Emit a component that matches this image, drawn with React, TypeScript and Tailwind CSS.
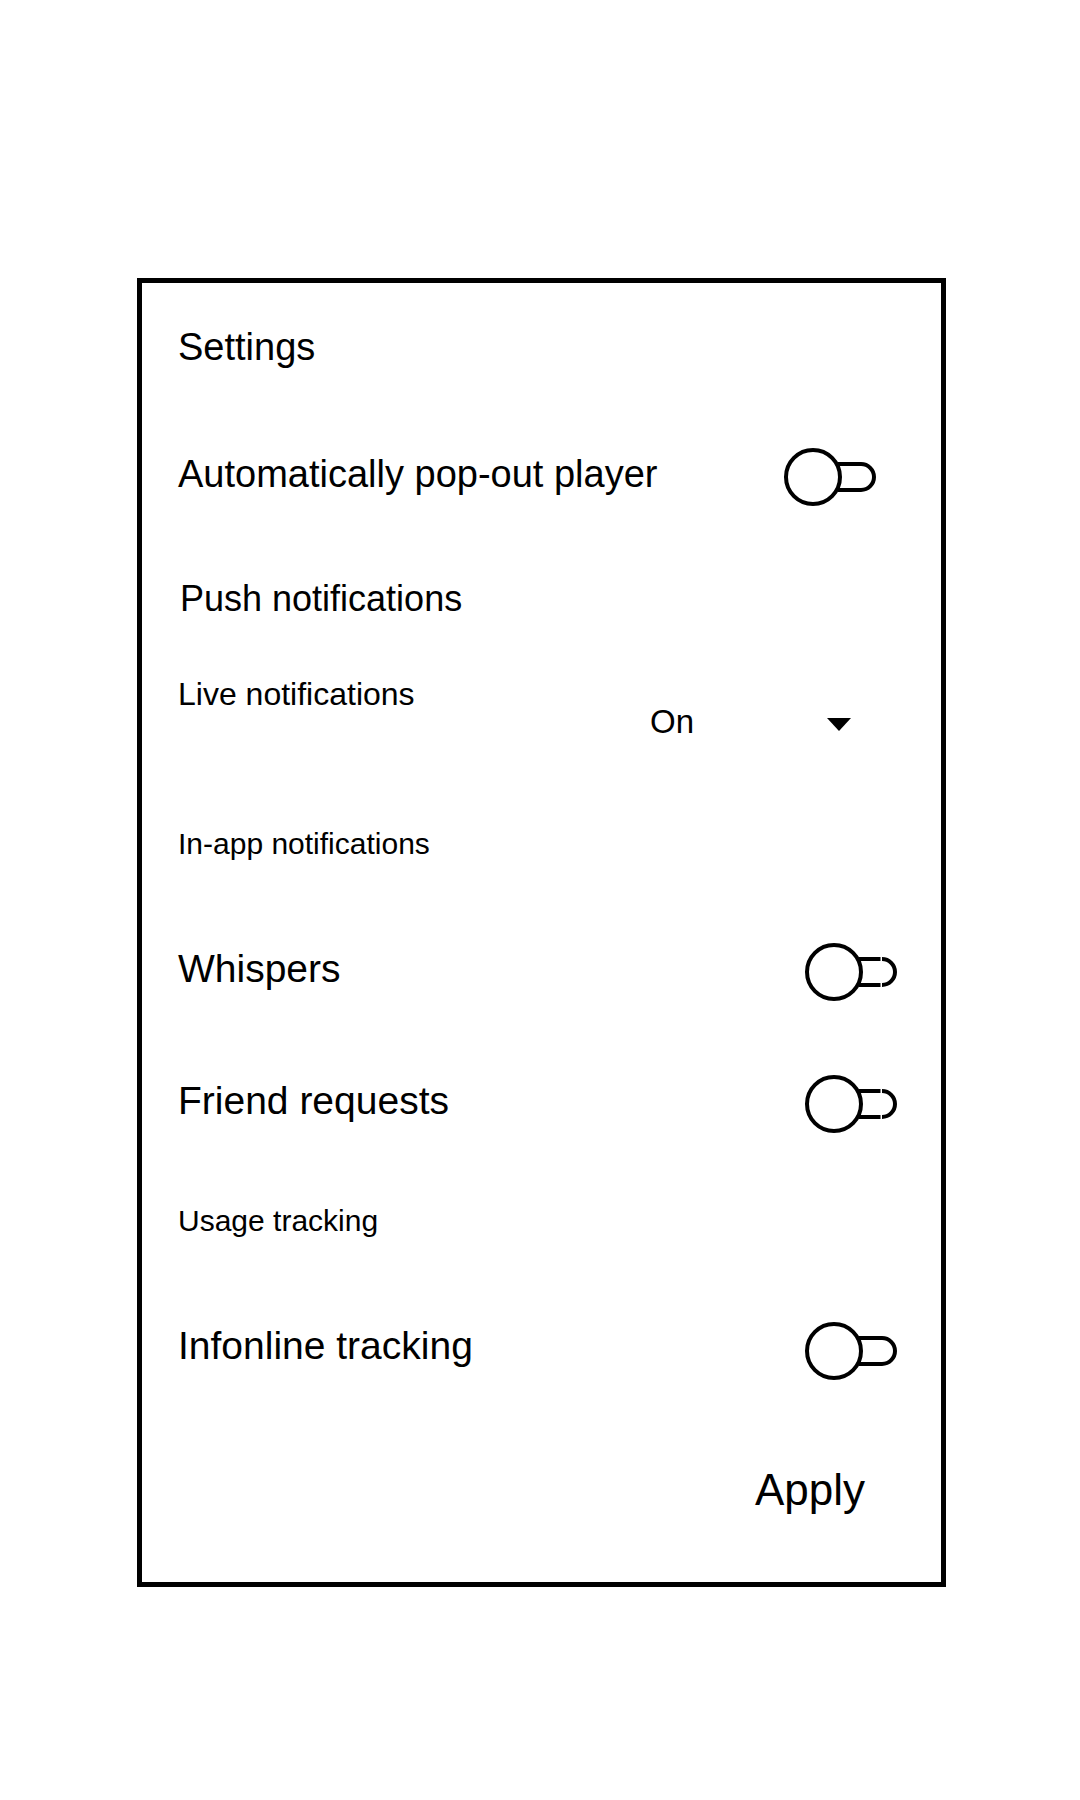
import React from "react";

function Toggle({ split = false }: { split?: boolean }) {
  return (
    <svg width="96" height="62" viewBox="0 0 96 62" fill="none" className="shrink-0">
      <circle cx="31" cy="31" r="27" stroke="black" strokeWidth="4" />
      {split ? (
        <>
          <path d="M56 18 H77.5 M56 44 H77.5" stroke="black" strokeWidth="4" />
          <path d="M79 18 A13 13 0 0 1 79 44" stroke="black" strokeWidth="4" />
        </>
      ) : (
        <path d="M56 18 H79 A13 13 0 0 1 79 44 H56" stroke="black" strokeWidth="4" />
      )}
    </svg>
  );
}

export default function App() {
  return (
    <div className="min-h-[1800px] w-[1080px] bg-white font-['Liberation_Sans',Arial,sans-serif] text-black">
      <div className="flex pt-[278px] pl-[137px]">
        <div className="flex h-[1309px] w-[809px] flex-col border-[5px] border-black pl-[36px]">
          {/* Header */}
          <h1 className="mt-[45px] text-[38px] leading-none">Settings</h1>

          {/* Player */}
          <div className="mt-[80px] flex items-start pr-[63px]">
            <span className="mt-[9px] text-[38px] leading-none">Automatically pop-out player</span>
            <div className="ml-auto">
              <Toggle />
            </div>
          </div>

          {/* Push */}
          <h2 className="ml-[2px] mt-[73px] text-[36px] leading-none">Push notifications</h2>

          <div className="mt-[61px] flex items-start pr-[90px]">
            <span className="text-[32px] leading-none">Live notifications</span>
            <div className="ml-auto mt-[27px] flex items-start gap-[133px]">
              <span className="text-[33px] leading-none">On</span>
              <svg width="24" height="13" viewBox="0 0 24 13" className="mt-[13px]">
                <polygon points="0,0 24,0 12,13" fill="black" />
              </svg>
            </div>
          </div>

          {/* In-app */}
          <h2 className="mt-[91px] text-[30px] leading-none">In-app notifications</h2>

          <div className="mt-[82px] flex items-start pr-[42px]">
            <span className="mt-[8px] text-[39px] leading-none">Whispers</span>
            <div className="ml-auto">
              <Toggle split />
            </div>
          </div>

          <div className="mt-[70px] flex items-start pr-[42px]">
            <span className="mt-[8px] text-[39px] leading-none">Friend requests</span>
            <div className="ml-auto">
              <Toggle split />
            </div>
          </div>

          {/* Usage */}
          <h2 className="mt-[71px] text-[30px] leading-none">Usage tracking</h2>

          <div className="mt-[84px] flex items-start pr-[42px]">
            <span className="mt-[6px] text-[39px] leading-none">Infonline tracking</span>
            <div className="ml-auto">
              <Toggle />
            </div>
          </div>

          <div className="mt-[86px] flex justify-end pr-[76px]">
            <button className="text-[44px] leading-none">Apply</button>
          </div>
        </div>
      </div>
    </div>
  );
}
